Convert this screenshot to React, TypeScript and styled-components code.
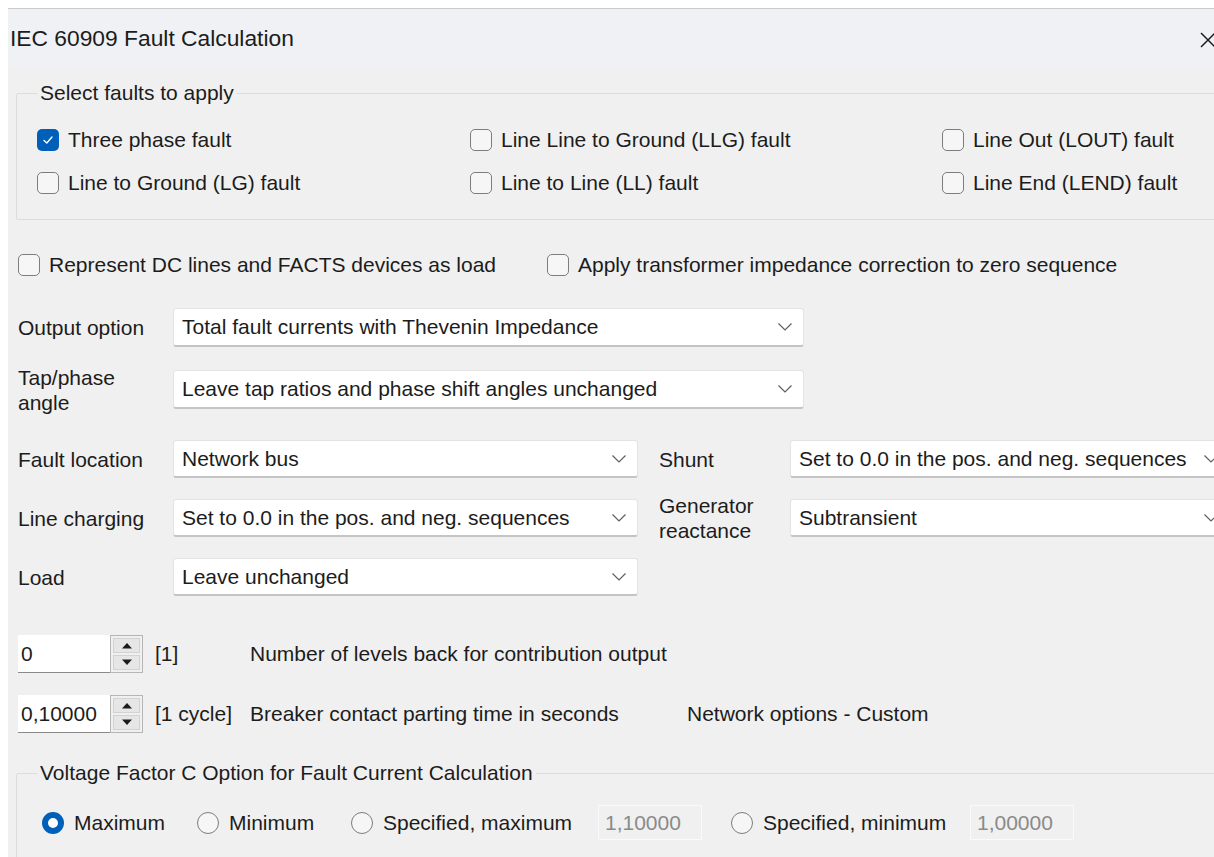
import styled, { createGlobalStyle } from "styled-components";

const GlobalStyle = createGlobalStyle`
  html, body {
    margin: 0;
    background: #ffffff;
    overflow: hidden;
  }
  body {
    font-family: "Liberation Sans", Arial, sans-serif;
    color: #1c1c1c;
  }
`;

// 검사 항목 목록
const faultColumns = [
  [
    { label: "Three phase fault", checked: true },
    { label: "Line to Ground (LG) fault", checked: false },
  ],
  [
    { label: "Line Line to Ground (LLG) fault", checked: false },
    { label: "Line to Line (LL) fault", checked: false },
  ],
  [
    { label: "Line Out (LOUT) fault", checked: false },
    { label: "Line End (LEND) fault", checked: false },
  ],
];

const CheckMark = () => (
  <svg width="14" height="14" viewBox="0 0 14 14">
    <path d="M3 7.4 L5.8 10 L11 4" fill="none" stroke="#ffffff" strokeWidth="1.4" strokeLinecap="round" strokeLinejoin="round" />
  </svg>
);

const Chevron = () => (
  <svg width="16" height="10" viewBox="0 0 16 10">
    <path d="M1.5 1.5 L8 8 L14.5 1.5" fill="none" stroke="#5f5f5f" strokeWidth="1.2" />
  </svg>
);

const CheckItem: React.FC<{ label: string; checked?: boolean }> = ({ label, checked = false }) => (
  <Check>
    <Box $checked={checked}>{checked && <CheckMark />}</Box>
    <span>{label}</span>
  </Check>
);

const RadioItem: React.FC<{ label: string; checked?: boolean }> = ({ label, checked = false }) => (
  <Check $gap={10}>
    <Dot $checked={checked} />
    <span>{label}</span>
  </Check>
);

const Select: React.FC<{ value: string }> = ({ value }) => (
  <SelectBox>
    <SelectValue>{value}</SelectValue>
    <Chevron />
  </SelectBox>
);

const Spinner: React.FC<{ value: string }> = ({ value }) => (
  <SpinBox>
    <SpinInput>{value}</SpinInput>
    <SpinButtons>
      <SpinHalf>
        <svg width="12" height="7" viewBox="0 0 12 7">
          <path d="M1 6.5 L6 1 L11 6.5 Z" fill="#1c1c1c" />
        </svg>
      </SpinHalf>
      <SpinHalf>
        <svg width="12" height="7" viewBox="0 0 12 7">
          <path d="M1 0.5 L6 6 L11 0.5 Z" fill="#1c1c1c" />
        </svg>
      </SpinHalf>
    </SpinButtons>
  </SpinBox>
);

const App: React.FC = () => {
  return (
    <>
      <GlobalStyle />
      <Window>
        <TitleBar>
          <Title>IEC 60909 Fault Calculation</Title>
          <Close>
            <svg width="18" height="18" viewBox="0 0 18 18">
              <path d="M2 2 L16 16 M16 2 L2 16" stroke="#1c1c1c" strokeWidth="1.5" />
            </svg>
          </Close>
        </TitleBar>

        <Body>
          <Group $top={13}>
            <Legend>Select faults to apply</Legend>
            <FaultGrid>
              {faultColumns.map((col, i) => (
                <FaultColumn key={i}>
                  {col.map((f) => (
                    <CheckItem key={f.label} label={f.label} checked={f.checked} />
                  ))}
                </FaultColumn>
              ))}
            </FaultGrid>
          </Group>

          <OptionRow>
            <CheckItem label="Represent DC lines and FACTS devices as load" />
            <CheckItem label="Apply transformer impedance correction to zero sequence" />
          </OptionRow>

          <FormGrid>
            <Label>Output option</Label>
            <Select value="Total fault currents with Thevenin Impedance" />
            <Label>
              Tap/phase
              <br />
              angle
            </Label>
            <Select value="Leave tap ratios and phase shift angles unchanged" />
          </FormGrid>

          <NetworkGrid>
            <Label>Fault location</Label>
            <Select value="Network bus" />
            <Label $indent>Shunt</Label>
            <Select value="Set to 0.0 in the pos. and neg. sequences" />

            <Label>Line charging</Label>
            <Select value="Set to 0.0 in the pos. and neg. sequences" />
            <Label $indent>
              Generator
              <br />
              reactance
            </Label>
            <Select value="Subtransient" />

            <Label>Load</Label>
            <Select value="Leave unchanged" />
          </NetworkGrid>

          <SpinGrid>
            <Spinner value="0" />
            <Note>[1]</Note>
            <Note>Number of levels back for contribution output</Note>
            <span />

            <Spinner value="0,10000" />
            <Note>[1 cycle]</Note>
            <Note>Breaker contact parting time in seconds</Note>
            <Note>Network options - Custom</Note>
          </SpinGrid>

          <Group $top={28}>
            <Legend>Voltage Factor C Option for Fault Current Calculation</Legend>
            <RadioGrid>
              <RadioItem label="Maximum" checked />
              <RadioItem label="Minimum" />
              <RadioItem label="Specified, maximum" />
              <Disabled>1,10000</Disabled>
              <RadioItem label="Specified, minimum" />
              <Disabled>1,00000</Disabled>
            </RadioGrid>
          </Group>
        </Body>
      </Window>
    </>
  );
};

export default App;

interface CheckProps {
  $checked: boolean;
}

const Window = styled.div`
  margin: 8px 0 0 8px;
  min-height: 849px;
  border-top: 1px solid #c9c9c9;
  background-color: #f0f0f0;
  font-size: 21px;
`;

const TitleBar = styled.div`
  height: 59px;
  display: flex;
  justify-content: space-between;
  align-items: center;
  padding-left: 2px;
  background-color: #eff1f4;
`;

const Title = styled.div`
  font-size: 22.8px;
`;

const Close = styled.div`
  display: flex;
  align-items: center;
  margin: 2px -3px 0 0;
`;

const Body = styled.div`
  padding-left: 8px;
`;

const Group = styled.fieldset<{ $top: number }>`
  margin: ${({ $top }) => $top}px -60px 0 0;
  padding: 20px 0 21px 20px;
  border: 1px solid #dcdcdc;
  border-radius: 2px;
`;

const Legend = styled.legend`
  padding: 0 3px;
  line-height: 24px;
`;

const FaultGrid = styled.div`
  display: grid;
  grid-template-columns: 433px 472px auto;
`;

const FaultColumn = styled.div`
  display: flex;
  flex-direction: column;
  gap: 13px;
`;

const Check = styled.label<{ $gap?: number }>`
  height: 30px;
  display: flex;
  align-items: center;
  gap: ${({ $gap }) => $gap ?? 9}px;
  white-space: nowrap;
`;

const Box = styled.span<CheckProps>`
  width: 22px;
  height: 22px;
  flex: none;
  display: flex;
  align-items: center;
  justify-content: center;
  box-sizing: border-box;
  border-radius: 5px;
  border: ${({ $checked }) => ($checked ? "none" : "1.5px solid #7d7d7d")};
  background-color: ${({ $checked }) => ($checked ? "#005fb8" : "#f6f6f6")};
`;

const Dot = styled.span<CheckProps>`
  width: 22px;
  height: 22px;
  flex: none;
  box-sizing: border-box;
  border-radius: 50%;
  border: ${({ $checked }) => ($checked ? "6.5px solid #005fb8" : "1.5px solid #7d7d7d")};
  background-color: ${({ $checked }) => ($checked ? "#ffffff" : "#f6f6f6")};
`;

const OptionRow = styled.div`
  margin: 30px 0 0 2px;
  display: grid;
  grid-template-columns: 529px auto;
`;

const FormGrid = styled.div`
  margin: 28px 0 0 2px;
  display: grid;
  grid-template-columns: 155px 631px;
  grid-auto-rows: 39px;
  row-gap: 23px;
`;

const NetworkGrid = styled.div`
  margin: 31px 0 0 2px;
  display: grid;
  grid-template-columns: 155px 465px 152px 440px;
  grid-auto-rows: 38px;
  row-gap: 21px;
`;

const Label = styled.div<{ $indent?: boolean }>`
  display: flex;
  align-items: center;
  padding-left: ${({ $indent }) => ($indent ? "21px" : "0")};
  line-height: 25px;
  white-space: nowrap;
`;

const SelectBox = styled.div`
  display: flex;
  align-items: center;
  gap: 8px;
  padding: 0 10px 0 8px;
  box-sizing: border-box;
  background-color: #ffffff;
  border: 1px solid #e3e3e3;
  border-bottom: 2px solid #c4c4c4;
  border-radius: 3px;
  min-width: 0;
  overflow: hidden;
`;

const SelectValue = styled.span`
  flex: 1;
  white-space: nowrap;
  overflow: hidden;
`;

const SpinGrid = styled.div`
  margin: 39px 0 0 2px;
  display: grid;
  grid-template-columns: 137px 95px 437px auto;
  grid-auto-rows: 38px;
  row-gap: 22px;
  align-items: center;
`;

const SpinBox = styled.div`
  width: 125px;
  height: 38px;
  display: flex;
`;

const SpinInput = styled.div`
  flex: 1;
  display: flex;
  align-items: center;
  padding-left: 3px;
  background-color: #ffffff;
  border-bottom: 1px solid #8a8a8a;
`;

const SpinButtons = styled.div`
  width: 33px;
  display: flex;
  flex-direction: column;
  box-sizing: border-box;
  border: 1px solid #b5b5b5;
  padding: 2px;
  gap: 2px;
`;

const SpinHalf = styled.div`
  flex: 1;
  display: flex;
  align-items: center;
  justify-content: center;
  background-color: #e6e6e6;
  border: 1px solid #d2d2d2;
`;

const Note = styled.span`
  white-space: nowrap;
`;

const RadioGrid = styled.div`
  margin-left: 5px;
  display: grid;
  grid-template-columns: 155px 154px 247px 133px 239px 102px;
  grid-auto-rows: 35px;
  align-items: center;
`;

const Disabled = styled.div`
  width: 104px;
  height: 35px;
  box-sizing: border-box;
  display: flex;
  align-items: center;
  padding-left: 6px;
  color: #8a8a8a;
  background-color: #f0f0f0;
  border: 1px solid #fafafa;
`;
